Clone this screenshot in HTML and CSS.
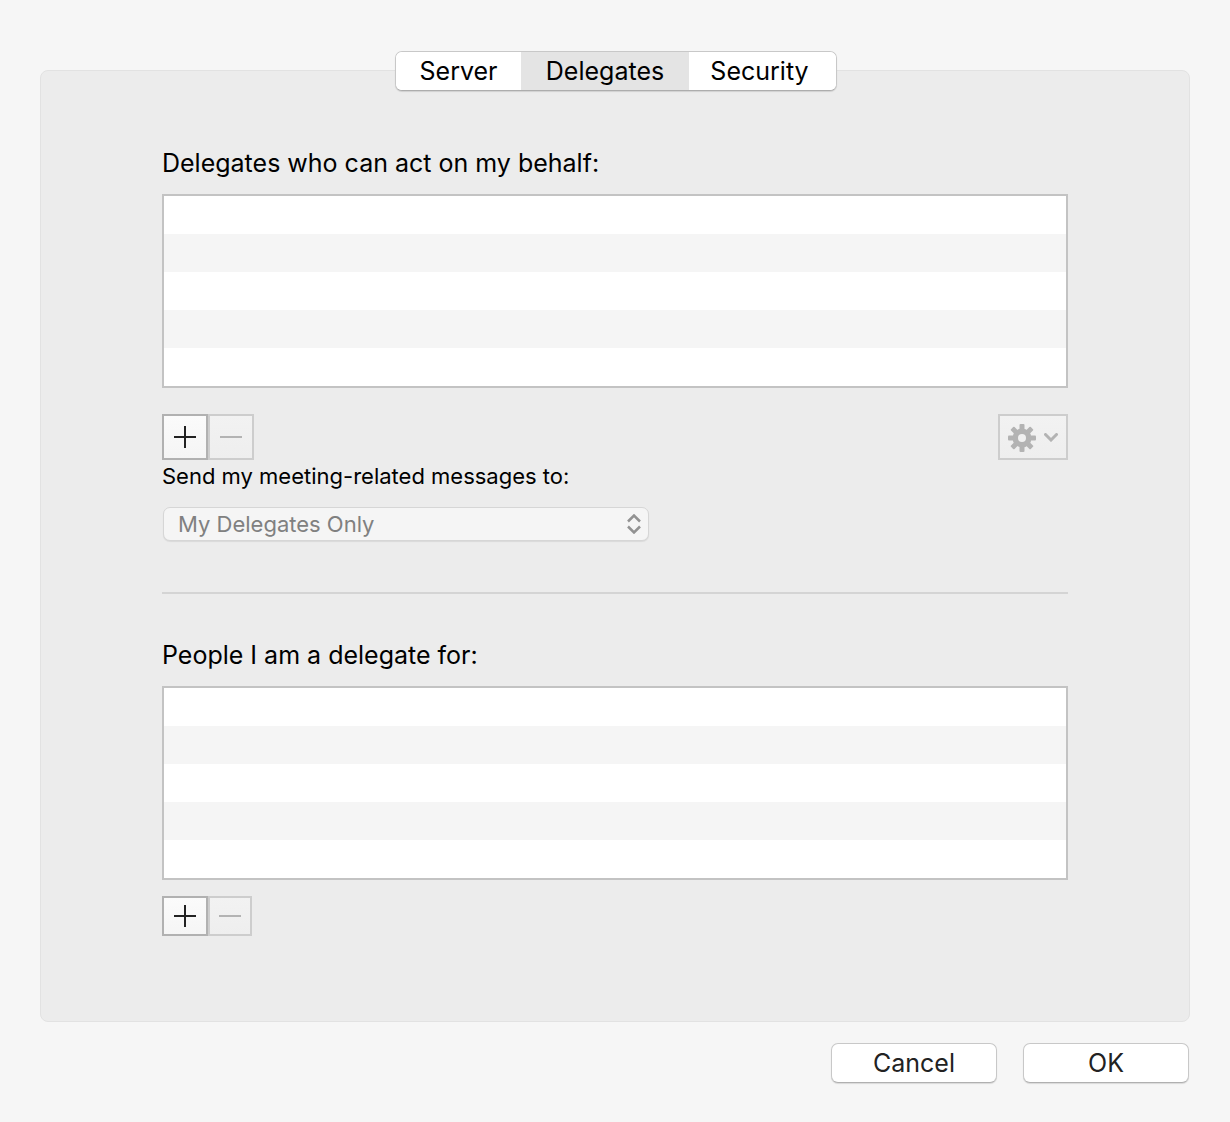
FILE: index.html
```html
<!DOCTYPE html>
<html lang="en">
<head>
<meta charset="utf-8">
<title>Delegates</title>
<link rel="stylesheet" href="styles.css">
</head>
<body>
<form class="dialog">
  <div class="tabs" role="tablist">
    <button type="button" class="tab tab-server" role="tab" aria-selected="false">Server</button>
    <button type="button" class="tab tab-delegates" role="tab" aria-selected="true">Delegates</button>
    <button type="button" class="tab tab-security" role="tab" aria-selected="false">Security</button>
  </div>
  <main class="panel">
    <section class="group">
      <h2 class="heading" id="my-delegates">Delegates who can act on my behalf:</h2>
      <ul class="list" aria-labelledby="my-delegates"><li></li><li></li><li></li><li></li><li></li></ul>
      <div class="toolbar">
        <button type="button" class="tool" aria-label="Add">
          <svg width="22" height="22" viewBox="0 0 22 22"><path d="M0 11H22M11 0V22"/></svg>
        </button>
        <button type="button" class="tool" aria-label="Remove" disabled>
          <svg width="22" height="22" viewBox="0 0 22 22"><path d="M0 11H22"/></svg>
        </button>
        <button type="button" class="tool tool-menu" aria-label="Options" disabled>
          <svg class="gear" width="28" height="30" viewBox="-14 -16 28 30">
            <g>
              <rect id="tooth" x="-2.5" y="-14" width="5" height="28" rx="1"/>
              <use href="#tooth" transform="rotate(45)"/>
              <use href="#tooth" transform="rotate(90)"/>
              <use href="#tooth" transform="rotate(135)"/>
              <circle r="9.5"/>
            </g>
            <circle class="gear-hole" r="4"/>
          </svg>
          <svg class="chevron" width="14" height="9" viewBox="0 0 14 9"><path d="M1.5 1.5L7 7L12.5 1.5"/></svg>
        </button>
      </div>
      <label class="label" for="messages">Send my meeting-related messages to:</label>
      <div class="select-box">
        <select class="select" id="messages" disabled><option>My Delegates Only</option></select>
        <svg class="arrows" width="14" height="20" viewBox="0 0 14 20"><path d="M1 7.5L7 1.5L13 7.5M1 12.5L7 18.5L13 12.5"/></svg>
      </div>
    </section>
    <hr class="divider">
    <section class="group">
      <h2 class="heading" id="delegate-for">People I am a delegate for:</h2>
      <ul class="list" aria-labelledby="delegate-for"><li></li><li></li><li></li><li></li><li></li></ul>
      <div class="toolbar toolbar-compact">
        <button type="button" class="tool" aria-label="Add">
          <svg width="22" height="22" viewBox="0 0 22 22"><path d="M0 11H22M11 0V22"/></svg>
        </button>
        <button type="button" class="tool tool-narrow" aria-label="Remove" disabled>
          <svg width="22" height="22" viewBox="0 0 22 22"><path d="M0 11H22"/></svg>
        </button>
      </div>
    </section>
  </main>
  <footer class="actions">
    <button type="button" class="action">Cancel</button>
    <button type="submit" class="action">OK</button>
  </footer>
</form>
</body>
</html>
```

FILE: styles.css
```css
* {
  box-sizing: border-box;
}

body {
  margin: 0;
  background: #f6f6f6;
  color: #000;
  font-family: Inter, "Liberation Sans", sans-serif;
}

button,
select {
  margin: 0;
  padding: 0;
  font: inherit;
  color: inherit;
}

.dialog {
  display: flex;
  flex-direction: column;
  padding: 51px 40px 38px;
}

.tabs {
  z-index: 1;
  display: flex;
  align-self: center;
  margin-bottom: -21px;
  margin-left: 2px;
  overflow: hidden;
  border: 1px solid #c8c8c8;
  border-bottom-color: #adadad;
  border-radius: 7px;
  background: #fff;
  box-shadow: 0 1px 1px rgba(0, 0, 0, 0.12);
}

.tab {
  height: 38px;
  border: 0;
  background: #fff;
  font-size: 25px;
}

.tab[aria-selected="true"] {
  background: #e4e4e4;
}

.tab-server {
  width: 125px;
}

.tab-delegates {
  width: 168px;
}

.tab-security {
  width: 147px;
  padding-right: 6px;
}

.panel {
  padding: 76px 121px 85px;
  border: 1px solid #e2e2e2;
  border-radius: 8px;
  background: #ececec;
}

.heading {
  margin: 0 0 15px;
  font-size: 25px;
  font-weight: 400;
  line-height: 32px;
}

.list {
  margin: 0;
  padding: 0;
  border: 2px solid #c3c3c3;
  background: #fff;
  list-style: none;
}

.list li {
  height: 38px;
}

.list li:nth-child(even) {
  background: #f5f5f5;
}

.toolbar {
  display: flex;
  height: 46px;
  margin-top: 26px;
}

.toolbar-compact {
  height: 40px;
  margin-top: 16px;
}

.tool {
  display: flex;
  align-items: center;
  justify-content: center;
  width: 46px;
  border: 2px solid #b1b1b1;
  background: linear-gradient(#fbfbfb, #f5f5f5);
}

.tool:disabled {
  border-color: #cdcdcd;
  background: linear-gradient(#f2f2f2, #eee);
}

.tool-narrow {
  width: 44px;
}

.tool path {
  fill: none;
  stroke: #222;
  stroke-width: 2;
}

.tool:disabled path {
  stroke: #b3b3b3;
}

.tool-menu {
  gap: 8px;
  width: 70px;
  margin-left: auto;
}

.gear {
  fill: #b3b3b3;
}

.gear-hole {
  fill: #f0f0f0;
}

.tool .chevron path {
  stroke-width: 3;
  stroke-linecap: round;
}

.label {
  display: block;
  margin: 2px 0 17px;
  font-size: 22px;
  line-height: 28px;
}

.select-box {
  position: relative;
  width: 54%;
  max-width: 486px;
  margin-left: 1px;
}

.select {
  display: block;
  width: 100%;
  height: 34px;
  padding: 0 40px 0 14px;
  border: 1px solid #d6d6d6;
  border-radius: 7px;
  background: #f5f5f5;
  box-shadow: 0 1px 1px rgba(0, 0, 0, 0.08);
  color: #808080;
  font-size: 22px;
  opacity: 1;
  appearance: none;
}

.arrows {
  position: absolute;
  top: 7px;
  right: 8px;
  fill: none;
  stroke: #929292;
  stroke-width: 2.5;
  pointer-events: none;
}

.divider {
  height: 2px;
  margin: 51px 0 45px;
  border: 0;
  background: #d4d4d4;
}

.actions {
  display: flex;
  justify-content: flex-end;
  gap: 26px;
  margin-top: 21px;
  padding-right: 1px;
}

.action {
  width: 166px;
  height: 40px;
  border: 1px solid #c8c8c8;
  border-bottom-color: #b0b0b0;
  border-radius: 7px;
  background: #fff;
  box-shadow: 0 1px 1px rgba(0, 0, 0, 0.12);
  color: #222;
  font-size: 25px;
}
```
